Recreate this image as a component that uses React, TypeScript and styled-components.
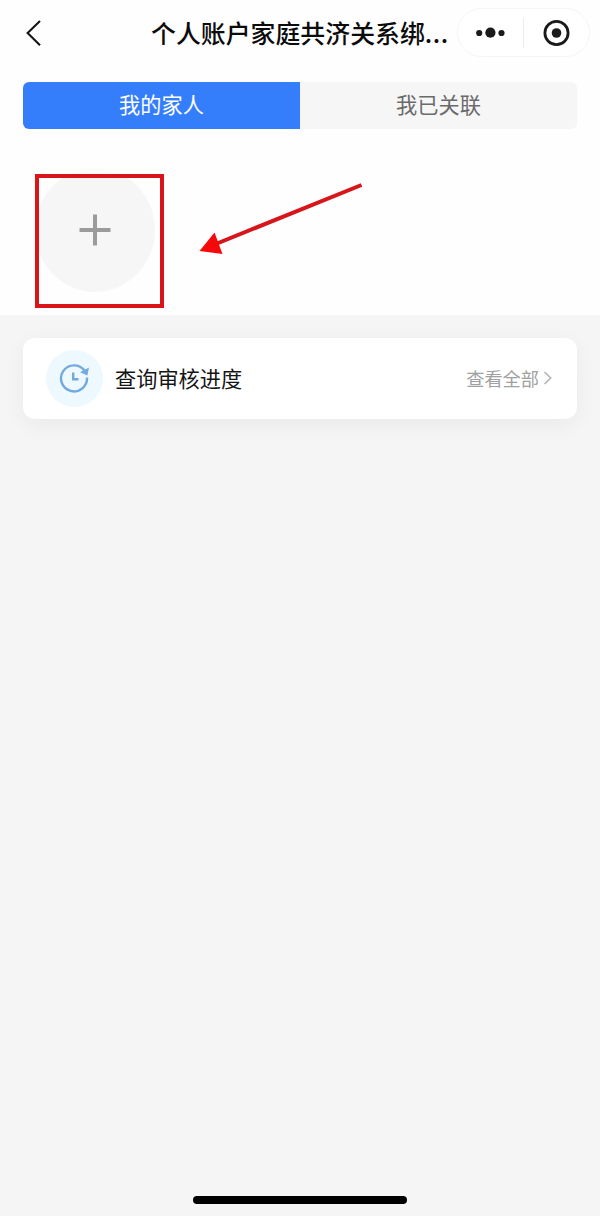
import React from "react";
import styled, { createGlobalStyle } from "styled-components";

const GlobalStyle = createGlobalStyle`
  * { box-sizing: border-box; }
  body {
    margin: 0;
    background: #f5f5f5;
    font-family: "Noto Sans CJK SC", sans-serif;
  }
  button {
    border: 0;
    padding: 0;
    background: none;
    font: inherit;
    color: inherit;
  }
`;

const Screen = styled.div`
  display: flex;
  flex-direction: column;
  width: 600px;
  height: 1216px;
  background: #f5f5f5;
`;

const Top = styled.section`
  height: 315px;
  background: #fefefe;
`;

const NavBar = styled.header`
  display: flex;
  align-items: center;
  height: 65px;
  padding: 0 10px 0 24px;
`;

const BackButton = styled.button`
  display: flex;
  width: 20px;
  height: 28px;
`;

const Title = styled.h1`
  flex: 1;
  margin: 0 0 0 107px;
  padding-bottom: 2px;
  font-size: 24.9px;
  font-weight: 500;
  line-height: 36px;
  color: #0c0c0c;
  white-space: nowrap;
`;

const Dots = styled.span`
  letter-spacing: 0.5px;
`;

const Capsule = styled.div`
  display: flex;
  align-items: center;
  width: 133px;
  height: 49px;
  border: 1px solid #f5f5f5;
  border-radius: 25px;
  background: #fff;
`;

const CapsuleButton = styled.button`
  display: flex;
  flex: 1;
  align-items: center;
  justify-content: center;
`;

const CapsuleDivider = styled.span`
  width: 1px;
  height: 30px;
  background: #ececec;
`;

const Tabs = styled.div`
  display: flex;
  height: 47px;
  margin: 17px 23px 0;
  border-radius: 6px;
  overflow: hidden;
`;

const Tab = styled.button<{ $active?: boolean }>`
  flex: 1;
  font-size: 21.2px;
  line-height: 43px;
  padding-bottom: 4px;
  background: ${(p) => (p.$active ? "#347efb" : "#f6f6f6")};
  color: ${(p) => (p.$active ? "#fff" : "#6b6b6b")};
`;

const Members = styled.div`
  position: relative;
  padding: 39px 0 0 35px;
`;

const AddButton = styled.button`
  display: flex;
  align-items: center;
  justify-content: center;
  width: 120px;
  height: 124px;
  border-radius: 50%;
  background: linear-gradient(#fcfcfc 8px, #f6f6f6 8px);
`;

const Highlight = styled.div`
  position: absolute;
  left: 35px;
  top: 45px;
  width: 129px;
  height: 134px;
  border: 4px solid #da1519;
`;

const Arrow = styled.svg`
  position: absolute;
  left: 190px;
  top: 41px;
`;

const Card = styled.section`
  display: flex;
  align-items: center;
  height: 81px;
  margin: 23px 23px 0;
  padding: 0 24px 0 23px;
  border-radius: 12px;
  background: #fff;
  box-shadow: 0 6px 22px rgba(0, 0, 0, 0.05);
`;

const ClockBadge = styled.span`
  display: flex;
  align-items: center;
  justify-content: center;
  width: 57px;
  height: 57px;
  padding: 0 2px 1px 0;
  border-radius: 50%;
  background: #edf8ff;
`;

const CardTitle = styled.span`
  flex: 1;
  margin-left: 12px;
  padding-bottom: 2px;
  font-size: 21.2px;
  line-height: 32px;
  color: #151515;
`;

const ViewAll = styled.button`
  display: flex;
  align-items: center;
  gap: 4px;
  padding-bottom: 2px;
  font-size: 18.2px;
  line-height: 28px;
  color: #a0a0a0;
`;

const HomeIndicator = styled.div`
  width: 214px;
  height: 8px;
  margin: auto auto 12px 193px;
  border-radius: 4px;
  background: #000;
`;

export default function App() {
  return (
    <Screen>
      <GlobalStyle />
      <Top>
        <NavBar>
          <BackButton aria-label="返回">
            <svg width="20" height="28" viewBox="0 0 20 28" fill="none" stroke="#161616" strokeWidth="2.1">
              <path d="M16 2 3.6 14 16 26.3" />
            </svg>
          </BackButton>
          <Title>
            个人账户家庭共济关系绑<Dots>...</Dots>
          </Title>
          <Capsule>
            <CapsuleButton aria-label="更多">
              <svg width="30" height="12" viewBox="0 0 30 12" fill="#1a1a1a">
                <circle cx="3.2" cy="6" r="3.1" />
                <circle cx="14.4" cy="5.7" r="5.1" />
                <circle cx="25.5" cy="6" r="3.1" />
              </svg>
            </CapsuleButton>
            <CapsuleDivider />
            <CapsuleButton aria-label="关闭">
              <svg width="28" height="28" viewBox="0 0 28 28">
                <circle cx="13.5" cy="14" r="11.6" fill="none" stroke="#1a1a1a" strokeWidth="2.8" />
                <circle cx="13.5" cy="14" r="4.8" fill="#1a1a1a" />
              </svg>
            </CapsuleButton>
          </Capsule>
        </NavBar>
        <Tabs>
          <Tab $active>我的家人</Tab>
          <Tab>我已关联</Tab>
        </Tabs>
        <Members>
          <AddButton aria-label="添加家人">
            <svg width="32" height="32" viewBox="0 0 32 32" stroke="#9b9b9b" strokeWidth="4">
              <path d="M16 .5v31M.5 16h31" />
            </svg>
          </AddButton>
          <Highlight />
          <Arrow width="180" height="90" viewBox="0 0 180 90">
            <path d="M171.5 15 27 73.5" stroke="#d6161b" strokeWidth="4" />
            <path d="M9.5 81 24.5 62.5 32.5 84Z" fill="#f40a0a" />
          </Arrow>
        </Members>
      </Top>
      <Card>
        <ClockBadge>
          <svg width="32" height="32" viewBox="0 0 32 32" fill="none" stroke="#72aade" strokeWidth="2.4">
            <path d="M26.6 8.8A13 13 0 1 0 29 15.5" />
            <path d="M15.2 10.5v6.7h5.3" />
            <path d="M22 10.3 31 5.4 29.4 13.4Z" fill="#72aade" stroke="none" />
          </svg>
        </ClockBadge>
        <CardTitle>查询审核进度</CardTitle>
        <ViewAll>
          查看全部
          <svg width="10" height="14" viewBox="0 0 10 14" fill="none" stroke="#b4b4b4" strokeWidth="1.6">
            <path d="M1.5 1 7.7 7l-6.2 6" />
          </svg>
        </ViewAll>
      </Card>
      <HomeIndicator />
    </Screen>
  );
}
